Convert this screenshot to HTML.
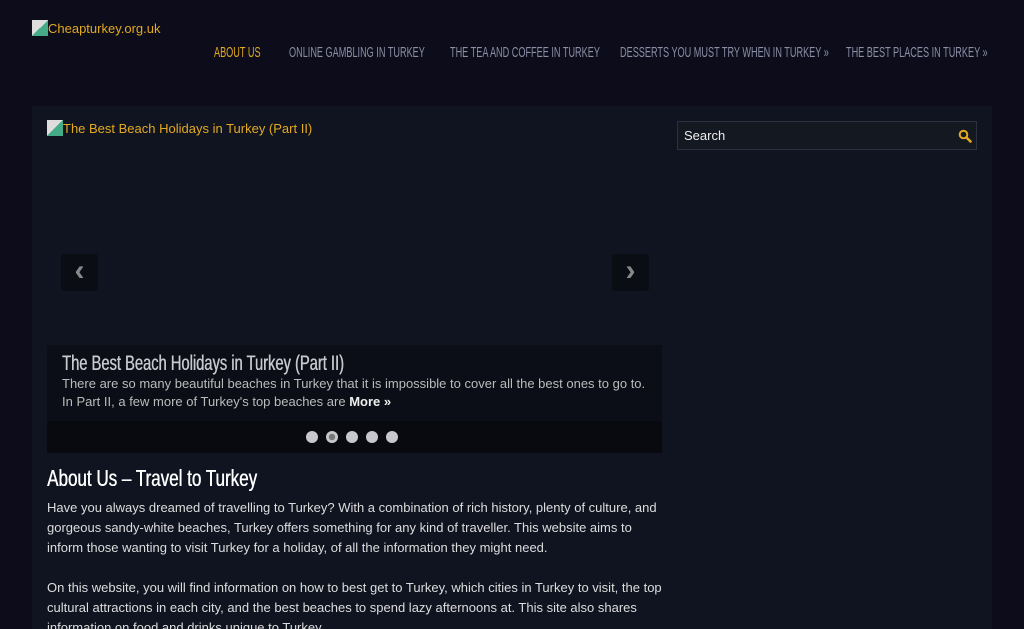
<!DOCTYPE html>
<html><head><meta charset="utf-8"><style>
*{margin:0;padding:0;box-sizing:border-box}
html,body{width:1024px;height:629px;overflow:hidden}
body{background:#0c0c1a;font-family:"Liberation Sans",sans-serif;color:#ddd;position:relative}
.logo{position:absolute;left:32px;top:20px;color:#e3a921;font-size:13px}
.ico{display:inline-block;width:16px;height:16px;vertical-align:-3px;background:linear-gradient(135deg,#ddd 50%,#4a8 50%)}
.nav{position:absolute;top:45px;font-size:14.5px;color:#8b8fa6;white-space:nowrap;transform:scaleX(0.63);transform-origin:left top}
.box{position:absolute;left:32px;top:106px;width:960px;height:523px;background:#0f1420}
.slidetitle{position:absolute;left:47px;top:120px;color:#e3a921;font-size:13px}
.arrow{position:absolute;top:254px;width:37px;height:37px;background:#0a0d14;border-radius:3px;color:#888;font-size:30px;font-weight:bold;text-align:center;line-height:34px}
.cap{position:absolute;left:47px;top:345px;width:615px;height:108px;background:#0b0e16}
.cap h2{position:absolute;left:15px;top:7px;font-weight:normal;font-size:21px;color:#c8c8d0;white-space:nowrap;transform:scaleX(0.7);transform-origin:left top;text-shadow:0.5px 0 0 #c8c8d0}
.cap p{position:absolute;left:15px;top:30px;font-size:13px;line-height:18px;color:#bbb;width:590px}
.dots{position:absolute;left:0;top:76px;width:615px;height:32px;background:#080a10;text-align:center;padding:10px 6px 0 0}
.dots span{display:inline-block;width:12px;height:12px;border-radius:50%;background:#c8c8cc;margin:0 4px;vertical-align:top}
.search{position:absolute;left:677px;top:121px;width:300px;height:29px;background:#141821;border:1px solid #2c3140;color:#eee;font-size:13px;padding:6px 6px}
h1{position:absolute;left:47px;top:465px;font-weight:normal;font-size:23px;color:#fff;white-space:nowrap;transform:scaleX(0.74);transform-origin:left top;text-shadow:0.5px 0 0 #fff}
.txt{position:absolute;left:47px;width:620px;font-size:13px;line-height:20px;color:#ddd}
</style></head><body>
<div class="logo"><span class="ico"></span>Cheapturkey.org.uk</div>
<div class="nav" style="left:214px;color:#e3a921">ABOUT US</div>
<div class="nav" style="left:289px">ONLINE GAMBLING IN TURKEY</div>
<div class="nav" style="left:450px">THE TEA AND COFFEE IN TURKEY</div>
<div class="nav" style="left:620px">DESSERTS YOU MUST TRY WHEN IN TURKEY »</div>
<div class="nav" style="left:846px">THE BEST PLACES IN TURKEY »</div>
<div class="box"></div>
<div class="slidetitle"><span class="ico"></span>The Best Beach Holidays in Turkey (Part II)</div>
<div class="arrow" style="left:61px">‹</div>
<div class="arrow" style="left:612px">›</div>
<div class="cap"><h2>The Best Beach Holidays in Turkey (Part II)</h2>
<p>There are so many beautiful beaches in Turkey that it is impossible to cover all the best ones to go to. In Part II, a few more of Turkey's top beaches are <b style="color:#eee">More »</b></p>
<div class="dots"><span></span><span style="background:radial-gradient(#777 35%,#c8c8cc 40%)"></span><span></span><span></span><span></span></div></div>
<div class="search">Search<svg style="position:absolute;right:4px;top:7px" width="14" height="14" viewBox="0 0 14 14"><circle cx="5.5" cy="5.5" r="3.8" fill="none" stroke="#e3a921" stroke-width="2"/><path d="M8.5 8.5L12.5 12.5" stroke="#e3a921" stroke-width="2.6" stroke-linecap="round"/></svg></div>
<h1>About Us – Travel to Turkey</h1>
<div class="txt" style="top:498px">Have you always dreamed of travelling to Turkey? With a combination of rich history, plenty of culture, and gorgeous sandy-white beaches, Turkey offers something for any kind of traveller. This website aims to inform those wanting to visit Turkey for a holiday, of all the information they might need.</div>
<div class="txt" style="top:578px">On this website, you will find information on how to best get to Turkey, which cities in Turkey to visit, the top cultural attractions in each city, and the best beaches to spend lazy afternoons at. This site also shares information on food and drinks unique to Turkey.</div>
</body></html>
